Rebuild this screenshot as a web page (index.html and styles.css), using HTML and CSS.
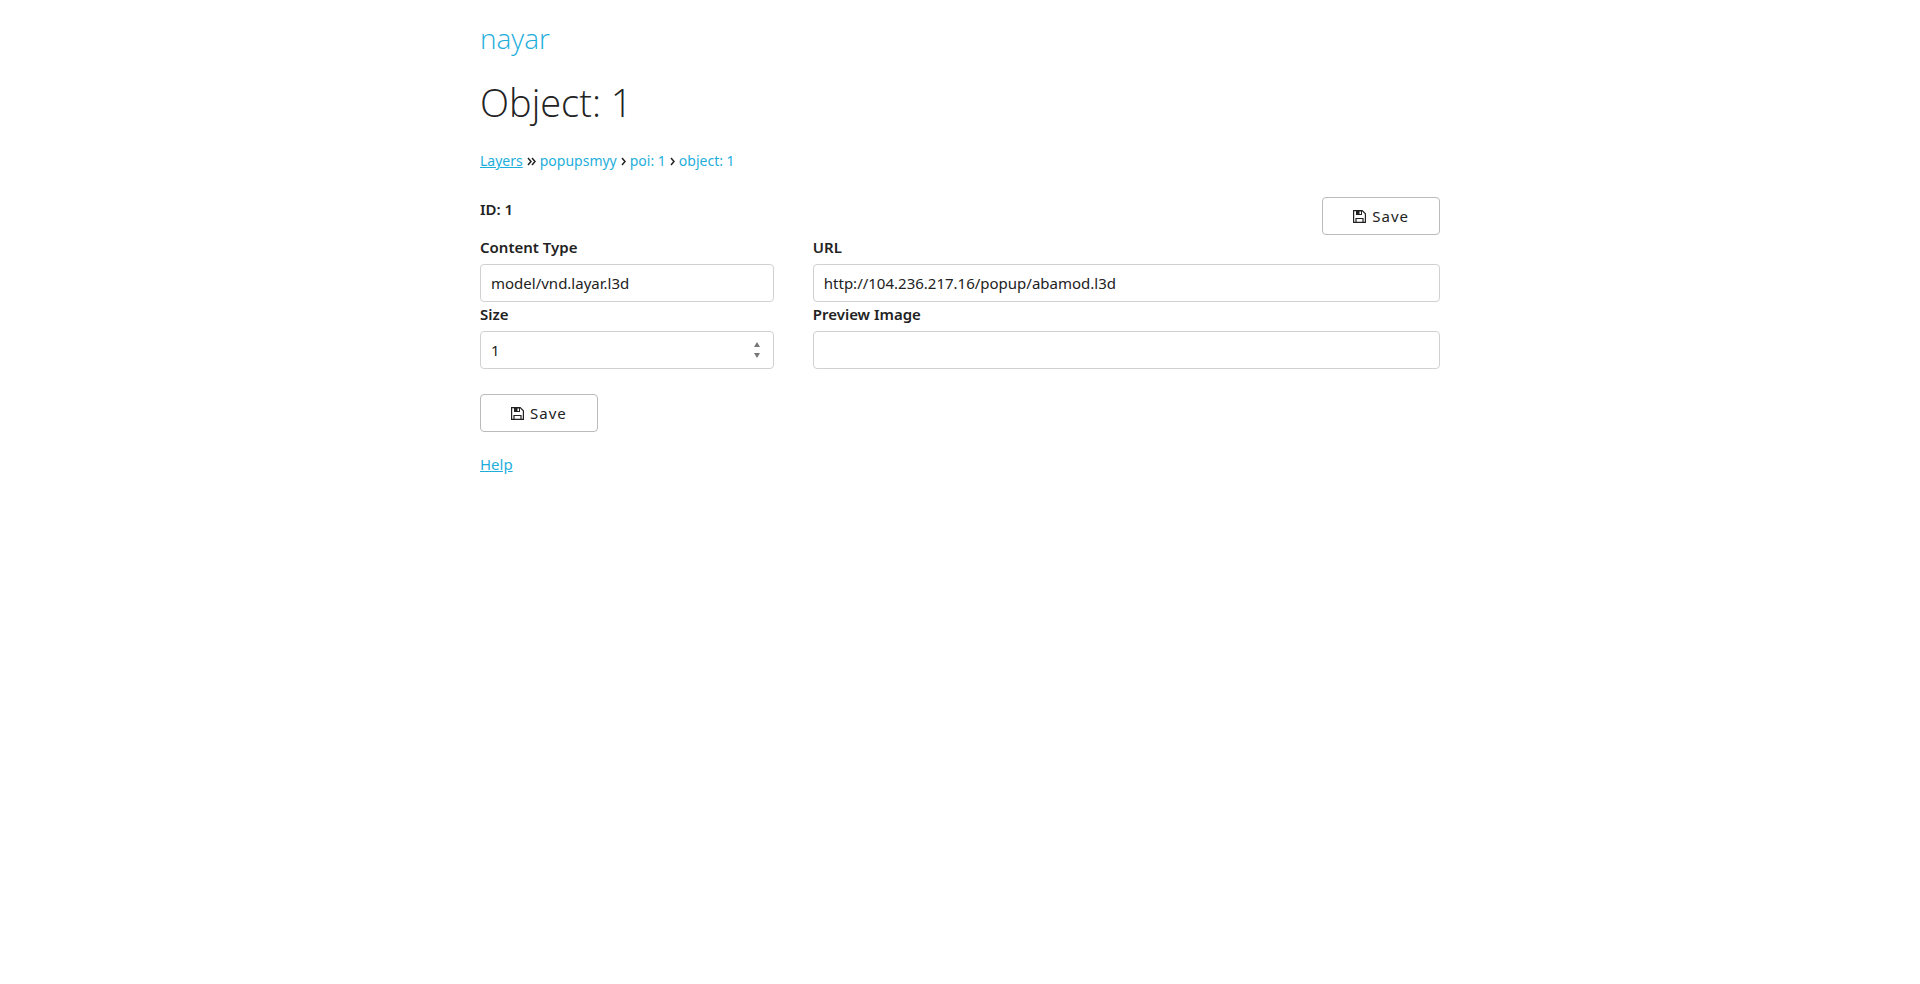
FILE: index.html
```html
<!DOCTYPE html>
<html lang="en">
<head>
<meta charset="utf-8">
<meta name="viewport" content="width=device-width, initial-scale=1">
<title>nayar</title>
<link rel="stylesheet" href="styles.css">
</head>
<body>
<svg class="sprite" aria-hidden="true">
  <symbol id="floppy" viewBox="0 0 13 13">
    <path d="M.6 .6H9.200L12.400 3.800V12.400H.6Z" fill="none" stroke="currentColor" stroke-width="1.200"/>
    <path d="M3 .5H9V5H3Z" fill="currentColor"/>
    <path d="M6.500 1.500H8V4H6.500Z" fill="#fff"/>
    <path d="M3 12.500V8.500H10V12.500" fill="none" stroke="currentColor" stroke-width="1.200"/>
  </symbol>
</svg>
<div class="container">
  <header>
    <p class="brand"><a href="#">nayar</a></p>
    <h1 class="title">Object: 1</h1>
  </header>
  <nav class="crumbs" aria-label="Breadcrumb">
    <a class="underlined" href="#">Layers</a>
    <svg class="chevron double" viewBox="0 0 9 9" aria-hidden="true"><path d="M1 1L4 4.500L1 8M5 1L8 4.500L5 8"/></svg>
    <a href="#">popupsmyy</a>
    <svg class="chevron" viewBox="0 0 5 9" aria-hidden="true"><path d="M1 1L4 4.500L1 8"/></svg>
    <a href="#">poi: 1</a>
    <svg class="chevron" viewBox="0 0 5 9" aria-hidden="true"><path d="M1 1L4 4.500L1 8"/></svg>
    <a href="#">object: 1</a>
  </nav>
  <form class="form">
    <div class="top">
      <strong class="ident">ID: 1</strong>
      <button class="save" type="button"><svg class="icon" aria-hidden="true"><use href="#floppy"/></svg>Save</button>
    </div>
    <div class="fields">
      <div class="field">
        <label for="type">Content Type</label>
        <input id="type" type="text" value="model/vnd.layar.l3d">
      </div>
      <div class="field">
        <label for="url">URL</label>
        <input id="url" type="text" value="http://104.236.217.16/popup/abamod.l3d">
      </div>
      <div class="field">
        <label for="size">Size</label>
        <div class="number">
          <input id="size" type="number" value="1">
          <svg class="spin" viewBox="0 0 6 16" aria-hidden="true"><path d="M0 5L3 0L6 5ZM0 11H6L3 16Z"/></svg>
        </div>
      </div>
      <div class="field">
        <label for="preview">Preview Image</label>
        <input id="preview" type="text">
      </div>
    </div>
    <button class="save" type="button"><svg class="icon" aria-hidden="true"><use href="#floppy"/></svg>Save</button>
  </form>
  <a class="underlined" href="#">Help</a>
</div>
</body>
</html>
```
FILE: styles.css
```css
* { box-sizing: border-box; }
body {
  margin: 0;
  background: #fff;
  color: #222;
  font: 15px/24px "Noto Sans", "Open Sans", sans-serif;
}
.sprite { position: absolute; width: 0; height: 0; }
.container { max-width: 960px; margin: 0 auto; padding: 20px 0; }
a { color: #1eaedb; text-decoration: none; }
.underlined { text-decoration: underline; }
.brand { margin: 0; font-size: 28px; line-height: 36px; font-weight: 300; font-family: "Open Sans", sans-serif; }
.title { margin: 22px 0 25px; font-size: 38px; line-height: 48px; font-weight: 300; font-family: "Open Sans", sans-serif; }
.crumbs { display: flex; align-items: center; gap: 4px; height: 20px; font-size: 14px; }
.chevron { width: 5px; height: 9px; fill: none; stroke: #222; stroke-width: 1.5; }
.double { width: 9px; }
.form { margin: 26px 0 20px; }
.top { display: flex; justify-content: space-between; align-items: flex-start; }
.save {
  display: inline-flex;
  align-items: center;
  justify-content: center;
  gap: 6px;
  height: 38px;
  padding: 0 30px;
  border: 1px solid #bbb;
  border-radius: 4px;
  background: transparent;
  color: #222;
  font: inherit;
  letter-spacing: 1px;
}
.icon { width: 13px; height: 13px; }
.ident, label { font-weight: 600; }
.fields {
  display: grid;
  grid-template-columns: 46fr 98fr;
  column-gap: 4%;
  margin-bottom: 25px;
}
label { display: block; margin-bottom: 5px; }
input {
  display: block;
  width: 100%;
  height: 38px;
  padding: 6px 10px;
  border: 1px solid #d1d1d1;
  border-radius: 4px;
  background: #fff;
  color: #222;
  font: inherit;
}
.number { position: relative; }
.number input { appearance: textfield; }
.number input::-webkit-inner-spin-button { appearance: none; margin: 0; }
.spin { position: absolute; right: 14px; top: 11px; width: 6px; height: 16px; fill: #777; pointer-events: none; }
```
